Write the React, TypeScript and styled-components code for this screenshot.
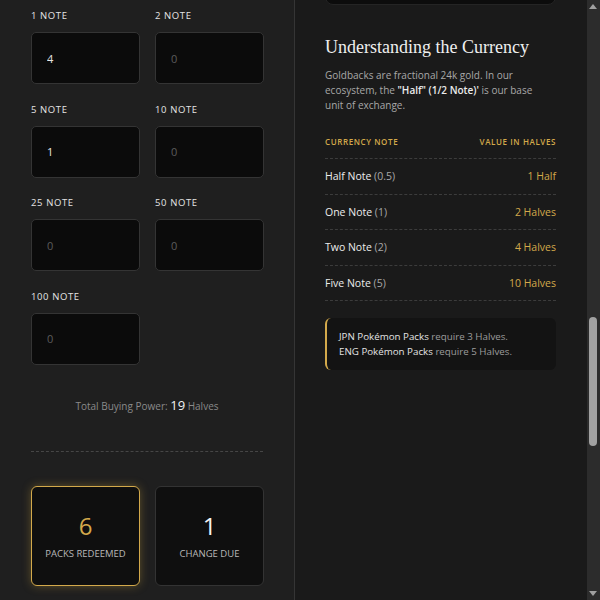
import { useLayoutEffect, useRef, useState } from "react";
import { styled, createGlobalStyle } from "styled-components";

const GOLD = "#d3a94b";
const SANS = `"Open Sans", "Noto Sans", sans-serif`;
const SERIF = `"Liberation Serif", serif`;

const GlobalStyle = createGlobalStyle`
  html, body {
    margin: 0;
    padding: 0;
    overflow: hidden;
    background: #1a1a1a;
  }
  body {
    font-family: ${SANS};
    color: #e6e6e6;
  }
  * {
    box-sizing: border-box;
  }
`;

const Shell = styled.div`
  display: flex;
  height: 100vh;
`;

const Viewport = styled.div`
  flex: 1;
  min-width: 0;
  overflow-y: scroll;
  scrollbar-width: none;
  background: #1a1a1a;

  &::-webkit-scrollbar {
    display: none;
  }
`;

const ScrollTrack = styled.div`
  position: relative;
  width: 13px;
  flex: none;
  background: #2c2c2c;
`;

const ScrollThumb = styled.div`
  position: absolute;
  left: 2px;
  width: 8px;
  border-radius: 4px;
  background: #a2a2a2;
`;

const ScrollArrow = styled.div<{ $down?: boolean }>`
  position: absolute;
  left: 2px;
  ${(p) => (p.$down ? "bottom: 4px;" : "top: 4px;")}
  width: 0;
  height: 0;
  border-left: 4.5px solid transparent;
  border-right: 4.5px solid transparent;
  ${(p) =>
    p.$down
      ? "border-top: 5px solid #a0a0a0;"
      : "border-bottom: 5px solid #a0a0a0;"}
`;

const Hero = styled.header`
  min-height: 1261px;
  display: flex;
  flex-direction: column;
  align-items: center;
  justify-content: center;
  gap: 12px;
  padding: 0 40px;
  text-align: center;
`;

const HeroTitle = styled.h1`
  margin: 0;
  font-family: ${SERIF};
  font-size: 34px;
  font-weight: 400;
  color: #f0f0f0;
`;

const HeroText = styled.p`
  margin: 0;
  font-size: 12px;
  color: #9a9a9a;
`;

const Main = styled.main`
  display: grid;
  grid-template-columns: 295px 1fr;
`;

const CalcPanel = styled.section`
  background: #1f1f1f;
  border-right: 1px solid #353535;
  padding: 30px 31px;
`;

const Intro = styled.div`
  height: 100px;
  margin-bottom: 24px;
  display: flex;
  flex-direction: column;
  gap: 8px;
  overflow: hidden;
`;

const PanelTitle = styled.h2`
  margin: 0;
  font-family: ${SERIF};
  font-size: 18px;
  font-weight: 400;
  color: #eee;
`;

const NoteGrid = styled.div`
  display: grid;
  grid-template-columns: 109px 109px;
  column-gap: 15px;
  row-gap: 19.5px;
`;

const Field = styled.label`
  display: flex;
  flex-direction: column;
`;

const FieldLabel = styled.span`
  font-size: 9.5px;
  line-height: 12px;
  font-weight: 500;
  letter-spacing: 0.6px;
  text-transform: uppercase;
  color: #e4e4e4;
  margin-bottom: 10px;
`;

const NoteInput = styled.input`
  width: 109px;
  height: 52px;
  background: #0b0b0b;
  border: 1px solid #343434;
  border-radius: 5px;
  padding: 0 15px;
  font-family: ${SANS};
  font-size: 11px;
  color: #e6e6e6;
  outline: none;

  &::placeholder {
    color: #5c5c5c;
  }
`;

const Total = styled.p`
  margin: 33px 0 0;
  text-align: center;
  font-size: 10px;
  line-height: 15px;
  color: #8a8a8a;

  strong {
    font-size: 13px;
    font-weight: 500;
    color: #f2f2f2;
  }
`;

const Divider = styled.hr`
  margin: 37px 0 34px;
  border: none;
  border-top: 1px dashed #464646;
`;

const ResultGrid = styled.div`
  display: grid;
  grid-template-columns: 109px 109px;
  column-gap: 15px;
`;

const ResultBox = styled.div<{ $highlight?: boolean }>`
  height: 100px;
  display: flex;
  flex-direction: column;
  align-items: center;
  justify-content: center;
  gap: 6px;
  background: #0f0f0f;
  border-radius: 6px;
  border: ${(p) => (p.$highlight ? `1.5px solid ${GOLD}` : "1px solid #333")};
  box-shadow: ${(p) =>
    p.$highlight ? "0 0 10px rgba(212, 170, 60, 0.35)" : "none"};
`;

const ResultValue = styled.span<{ $highlight?: boolean }>`
  font-size: 24px;
  line-height: 30px;
  font-weight: 500;
  color: ${(p) => (p.$highlight ? GOLD : "#f4f4f4")};
`;

const ResultLabel = styled.span`
  font-size: 9.5px;
  text-transform: uppercase;
  color: #b8b8b8;
`;

const InfoColumn = styled.aside`
  padding: 30px 31px 30px 30px;
`;

const RateCard = styled.div`
  height: 119px;
  background: #0c0c0c;
  border: 1px solid #242424;
  border-radius: 8px;
  display: flex;
  align-items: center;
  justify-content: center;
  font-size: 12px;
  color: #999;
`;

const Heading = styled.h3`
  margin: 31px 0 10px;
  font-family: ${SERIF};
  font-size: 18px;
  line-height: 22px;
  font-weight: 400;
  color: #efefef;
`;

const Lead = styled.p`
  max-width: 212px;
  margin: 0 0 23px;
  font-size: 10px;
  line-height: 15px;
  color: #a8a8a8;

  b {
    font-weight: 600;
    color: #ececec;
  }
`;

const TableHead = styled.div`
  display: flex;
  justify-content: space-between;
  padding-bottom: 10px;
  border-bottom: 1px dashed #3c3c3c;
  font-size: 8px;
  line-height: 12px;
  font-weight: 600;
  letter-spacing: 0.6px;
  text-transform: uppercase;
  color: ${GOLD};
`;

const TableRow = styled.div`
  height: 35.5px;
  display: flex;
  align-items: center;
  justify-content: space-between;
  border-bottom: 1px dashed #3c3c3c;
  font-size: 10.5px;
`;

const NoteName = styled.span`
  font-weight: 500;
  color: #ececec;

  small {
    font-size: inherit;
    font-weight: 400;
    color: #a8a8a8;
  }
`;

const NoteValue = styled.span`
  font-weight: 500;
  color: ${GOLD};
`;

const Callout = styled.div`
  margin-top: 17px;
  padding: 11px 12px;
  background: #131313;
  border-left: 2px solid ${GOLD};
  border-radius: 6px;
  font-size: 9.75px;
  line-height: 15px;
  color: #9c9c9c;

  b {
    font-weight: 500;
    color: #e4e4e4;
  }
`;

const Footer = styled.footer`
  min-height: 630px;
  display: flex;
  align-items: flex-end;
  justify-content: center;
  padding: 40px;
  font-size: 10px;
  color: #666;
`;

const NOTES = [1, 2, 5, 10, 25, 50, 100];

const CURRENCY = [
  { name: "Half Note", rate: "0.5", value: "1 Half" },
  { name: "One Note", rate: "1", value: "2 Halves" },
  { name: "Two Note", rate: "2", value: "4 Halves" },
  { name: "Five Note", rate: "5", value: "10 Halves" },
];

const ARROW = 15;

export default function App() {
  const viewRef = useRef<HTMLDivElement>(null);
  const gridRef = useRef<HTMLDivElement>(null);
  const [thumb, setThumb] = useState({ top: ARROW, height: 0 });
  const [half, setHalf] = useState("1");
  const [counts, setCounts] = useState<Record<number, string>>({
    1: "4",
    5: "1",
  });

  const syncThumb = () => {
    const view = viewRef.current;
    if (!view) return;
    const track = view.clientHeight - ARROW * 2;
    setThumb({
      top: ARROW + (view.scrollTop / view.scrollHeight) * track,
      height: (view.clientHeight / view.scrollHeight) * track,
    });
  };

  useLayoutEffect(() => {
    const view = viewRef.current;
    const grid = gridRef.current;
    if (!view || !grid) return;
    const offset =
      grid.getBoundingClientRect().top -
      view.getBoundingClientRect().top +
      view.scrollTop;
    view.scrollTop = offset - 10;
    syncThumb();
  }, []);

  const total =
    (Number(half) || 0) +
    NOTES.reduce((sum, n) => sum + n * 2 * (Number(counts[n]) || 0), 0);
  const packs = Math.floor(total / 3);
  const change = total - packs * 3;

  return (
    <Shell>
      <GlobalStyle />
      <Viewport ref={viewRef} onScroll={syncThumb}>
        <Hero>
          <HeroTitle>Goldback Pack Exchange</HeroTitle>
          <HeroText>Trade your Goldbacks for sealed Pokémon packs.</HeroText>
        </Hero>
        <Main>
          <CalcPanel>
            <Intro>
              <PanelTitle>Exchange Calculator</PanelTitle>
              <Field>
                <FieldLabel>Half Note</FieldLabel>
                <NoteInput
                  inputMode="numeric"
                  placeholder="0"
                  value={half}
                  onChange={(e) => setHalf(e.target.value)}
                />
              </Field>
            </Intro>
            <NoteGrid ref={gridRef}>
              {NOTES.map((n) => (
                <Field key={n}>
                  <FieldLabel>{n} Note</FieldLabel>
                  <NoteInput
                    inputMode="numeric"
                    placeholder="0"
                    value={counts[n] ?? ""}
                    onChange={(e) =>
                      setCounts((prev) => ({ ...prev, [n]: e.target.value }))
                    }
                  />
                </Field>
              ))}
            </NoteGrid>
            <Total>
              Total Buying Power: <strong>{total}</strong> Halves
            </Total>
            <Divider />
            <ResultGrid>
              <ResultBox $highlight>
                <ResultValue $highlight>{packs}</ResultValue>
                <ResultLabel>Packs Redeemed</ResultLabel>
              </ResultBox>
              <ResultBox>
                <ResultValue>{change}</ResultValue>
                <ResultLabel>Change Due</ResultLabel>
              </ResultBox>
            </ResultGrid>
          </CalcPanel>
          <InfoColumn>
            <RateCard>1 Pack = 3 Halves</RateCard>
            <Heading>Understanding the Currency</Heading>
            <Lead>
              Goldbacks are fractional 24k gold. In our ecosystem, the{" "}
              <b>"Half" (1/2 Note)'</b> is our base unit of exchange.
            </Lead>
            <TableHead>
              <span>Currency Note</span>
              <span>Value in Halves</span>
            </TableHead>
            {CURRENCY.map((c) => (
              <TableRow key={c.name}>
                <NoteName>
                  {c.name} <small>({c.rate})</small>
                </NoteName>
                <NoteValue>{c.value}</NoteValue>
              </TableRow>
            ))}
            <Callout>
              <b>JPN Pokémon Packs</b> require 3 Halves.
              <br />
              <b>ENG Pokémon Packs</b> require 5 Halves.
            </Callout>
          </InfoColumn>
        </Main>
        <Footer>© Goldback Pack Exchange</Footer>
      </Viewport>
      <ScrollTrack>
        <ScrollArrow />
        <ScrollThumb style={{ top: thumb.top, height: thumb.height }} />
        <ScrollArrow $down />
      </ScrollTrack>
    </Shell>
  );
}
